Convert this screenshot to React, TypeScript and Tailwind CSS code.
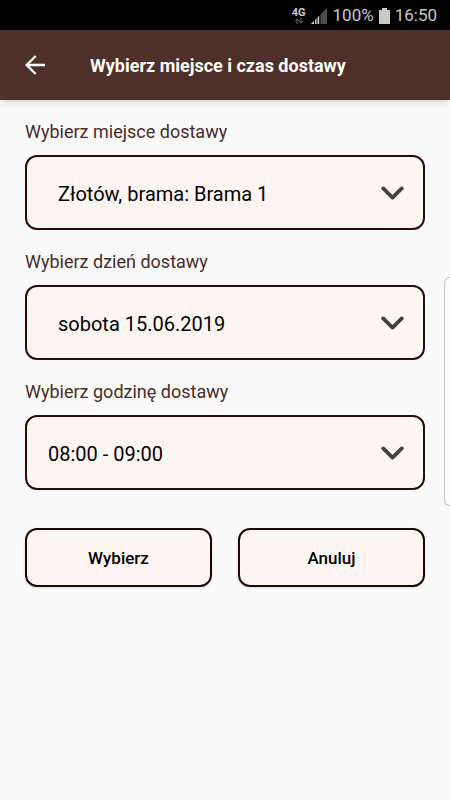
import { useId } from "react";

type FieldProps = {
  label: string;
  options: string[];
  indent?: boolean;
};

function SelectField({ label, options, indent = false }: FieldProps) {
  const id = useId();
  return (
    <div className="flex flex-col gap-[11px]">
      <label htmlFor={id} className="text-lg leading-6 text-[#4a2b28]">
        {label}
      </label>
      <div className="grid items-center">
        <select
          id={id}
          className={`col-start-1 row-start-1 h-[75px] w-full appearance-none rounded-xl border-2 border-[#2a0d0a] bg-[#fff5f3] pt-0.5 pr-16 text-xl text-black ${
            indent ? "pl-[31px]" : "pl-[21px]"
          }`}
        >
          {options.map((option) => (
            <option key={option}>{option}</option>
          ))}
        </select>
        <svg
          viewBox="0 0 24 16"
          className="pointer-events-none col-start-1 row-start-1 mr-5 h-4 w-6 justify-self-end"
          fill="none"
          stroke="#424242"
          strokeWidth="3.7"
          strokeLinecap="round"
          strokeLinejoin="round"
          aria-hidden="true"
        >
          <path d="M2.2 3.4 11.5 12.6l9.3-9.2" />
        </svg>
      </div>
    </div>
  );
}

function StatusBar() {
  return (
    <div className="flex h-[30px] items-center justify-end bg-black pt-px pr-[13px] text-[17px] text-[#c9c9c9]">
      <div className="mr-[5px] flex flex-col items-center">
        <span className="text-[11px] leading-[10px] font-bold">4G</span>
        <svg viewBox="0 0 10 6" className="h-[6px] w-[10px]" fill="none" stroke="#686868" aria-hidden="true">
          <path d="M3 6V1M1 3l2-2 2 2M7 0v5M5 3l2 2 2-2" />
        </svg>
      </div>
      <svg viewBox="0 0 16 16" className="mr-[6px] h-4 w-4" aria-hidden="true">
        <path d="M0 16 16 0V16Z" fill="#4c4c4c" />
        <path d="M0 16 8 8V16Z" fill="#d2d2d2" />
        <path d="M3.5 8V16M6 6V16M9 5V16" stroke="#000" strokeWidth="1" />
      </svg>
      <span className="mr-[5px]">100%</span>
      <svg viewBox="0 0 11 16" className="mr-[5px] h-4 w-[11px]" fill="#c9c9c9" aria-hidden="true">
        <path d="M3 0h5v2h3v14H0V2h3Z" />
      </svg>
      <span>16:50</span>
    </div>
  );
}

const actionClass =
  "h-[59px] rounded-xl border-2 border-[#1d0806] bg-[#fff5f3] pt-0.5 text-[17px] font-medium text-black shadow-sm";

export default function App() {
  return (
    <div className="relative min-h-screen bg-[#fafafa] font-[Roboto,sans-serif]">
      <StatusBar />
      <header className="flex h-[70px] items-center bg-[#4e2f29] pl-[25px] text-white shadow-md">
        <button type="button" aria-label="Wstecz" className="mr-[45px]">
          <svg
            viewBox="0 0 20 20"
            className="h-5 w-5"
            fill="none"
            stroke="currentColor"
            strokeWidth="2.4"
            aria-hidden="true"
          >
            <path d="M20 10H2M10.7 1 1.6 10l9.1 9" />
          </svg>
        </button>
        <h1 className="pt-0.5 text-lg font-bold">Wybierz miejsce i czas dostawy</h1>
      </header>
      <form className="flex flex-col gap-5 px-[25px] pt-5" onSubmit={(event) => event.preventDefault()}>
        <SelectField label="Wybierz miejsce dostawy" options={["Złotów, brama: Brama 1"]} indent />
        <SelectField label="Wybierz dzień dostawy" options={["sobota 15.06.2019"]} indent />
        <SelectField label="Wybierz godzinę dostawy" options={["08:00 - 09:00"]} />
        <div className="grid grid-cols-2 gap-[26px] pt-[18px]">
          <button type="submit" className={actionClass}>
            Wybierz
          </button>
          <button type="button" className={actionClass}>
            Anuluj
          </button>
        </div>
      </form>
      <div className="absolute top-[277px] right-0 h-[229px] w-[6px] rounded-l-md border border-r-0 border-[#c4c4c4] bg-[#fcfcfc]" />
    </div>
  );
}
